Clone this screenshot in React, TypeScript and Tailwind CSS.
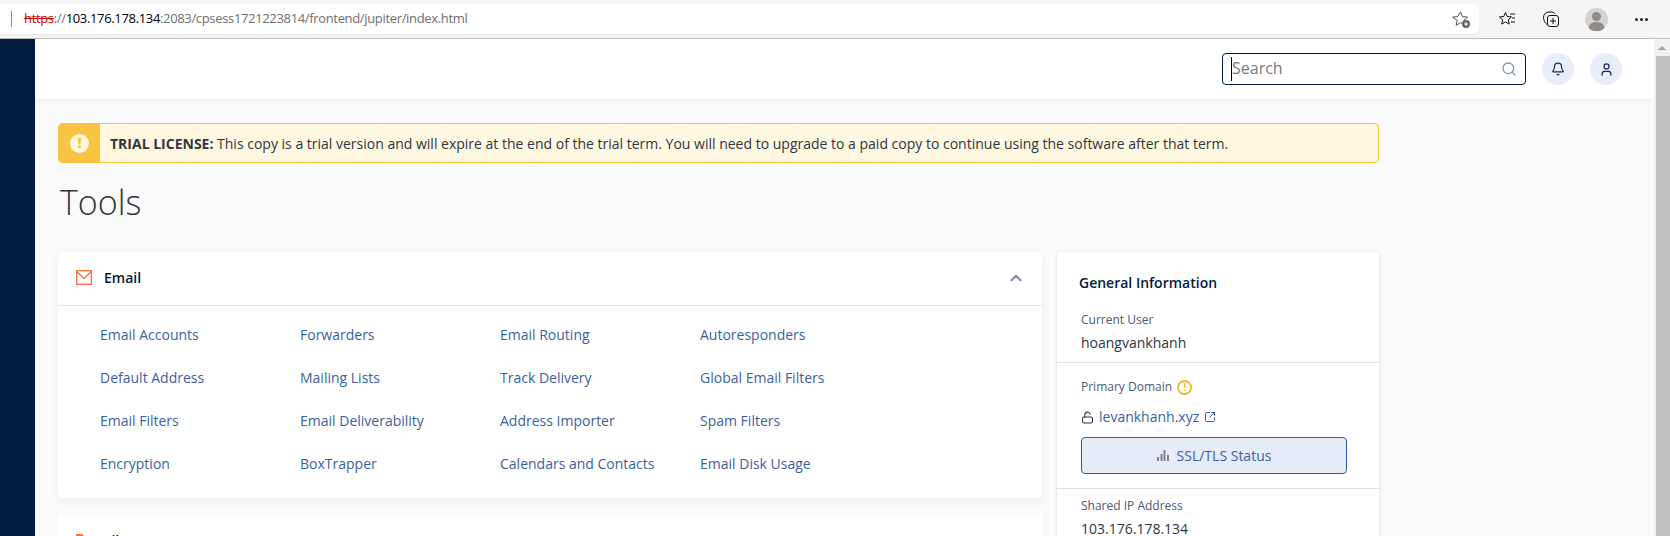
import { Bell, ChevronUp, LockOpen, Search, SquareArrowOutUpRight, User } from "lucide-react";

const font = { fontFamily: '"Open Sans", sans-serif' };

const emailLinks = [
  ["Email Accounts", "Forwarders", "Email Routing", "Autoresponders"],
  ["Default Address", "Mailing Lists", "Track Delivery", "Global Email Filters"],
  ["Email Filters", "Email Deliverability", "Address Importer", "Spam Filters"],
  ["Encryption", "BoxTrapper", "Calendars and Contacts", "Email Disk Usage"],
];

function BrowserBar() {
  return (
    <div className="flex h-[39px] shrink-0 items-start border-b border-[#bdbdbd] bg-[#f5f5f5]">
      <div className="mt-1 flex h-[30px] w-[1479px] items-center justify-between rounded-r-md bg-white pl-[11px] pr-2 shadow-[0_1px_1px_rgba(0,0,0,0.06)]">
        <div className="flex items-center">
          <span className="mr-3 h-4 w-px bg-[#8a8a8a]" />
          <span className="text-[13px] tracking-[-0.34px] text-[#6f6f6f]">
            <span className="text-[#d00000] line-through">https</span>://
            <span className="text-black">103.176.178.134</span>:2083/cpsess1721223814/frontend/jupiter/index.html
          </span>
        </div>
        <svg width="19" height="19" viewBox="0 0 19 19" fill="none">
          <path d="M8.500 2l2 4.600 5 .5-3.700 3.300 1 4.800-4.300-2.500-4.300 2.500 1-4.800L.6 7.100l5-.5z" stroke="#555" strokeWidth="1" fill="#fff" />
          <circle cx="14" cy="14" r="4" fill="#666" />
          <path d="M12 14h4M14 12v4" stroke="#fff" strokeWidth="1" />
        </svg>
      </div>
      <div className="flex h-[38px] flex-1 items-center">
        <svg className="ml-[19px]" width="19" height="19" viewBox="0 0 19 19" fill="none" stroke="#111" strokeWidth="1">
          <path d="M7.500 2.500l1.700 4 4.300.4-3.200 2.900.9 4.300-3.700-2.200-3.800 2.200 1-4.300L1.500 6.900l4.300-.4z" />
          <path d="M12 4h5M14 8h3M13 12h4" />
        </svg>
        <svg className="ml-[25px]" width="19" height="19" viewBox="0 0 19 19" fill="none" stroke="#111" strokeWidth="1">
          <path d="M5 14.500C3 13 1.500 10 1.500 7.500 1.500 4 4 2 7 2h3c1.500 0 2.500 1 3 2" />
          <rect x="5.500" y="5.500" width="11" height="11" rx="2.500" />
          <path d="M11 8v6M8 11h6" />
        </svg>
        <svg className="ml-[24px]" width="23" height="23" viewBox="0 0 23 23">
          <circle cx="11.500" cy="11.500" r="11.500" fill="#d5d3d0" />
          <circle cx="11.500" cy="8.500" r="4.500" fill="#8f8b87" />
          <path d="M3.500 20c1-4.500 4-6 8-6s7 1.500 8 6a11.500 11.500 0 0 1-16 0z" fill="#8f8b87" />
        </svg>
        <span className="ml-[27px] flex gap-[2px]">
          <span className="h-[3px] w-[3px] rounded-full bg-[#222]" />
          <span className="h-[3px] w-[3px] rounded-full bg-[#222]" />
          <span className="h-[3px] w-[3px] rounded-full bg-[#222]" />
        </span>
      </div>
    </div>
  );
}

function TopBar() {
  return (
    <div className="flex h-[60px] shrink-0 items-center justify-end bg-white pr-[32px] shadow-[0_2px_6px_rgba(0,0,0,0.05)]">
      <div className="flex h-8 w-[304px] items-center justify-between rounded border border-[#001b44] pl-[8px] pr-2">
        <span className="-mt-[2px] flex items-center text-base text-[#7a7a7a]">
          <span className="mt-[2px] h-[24px] w-px bg-black" />
          Search
        </span>
        <Search size={16} strokeWidth={2} className="text-[#8294bf]" />
      </div>
      <div className="ml-4 flex h-8 w-8 items-center justify-center rounded-full bg-[#e9ecf9]">
        <Bell size={14} className="text-[#1d2b55]" />
      </div>
      <div className="ml-4 flex h-8 w-8 items-center justify-center rounded-full bg-[#e9ecf9]">
        <User size={15} className="text-[#1d2b55]" />
      </div>
    </div>
  );
}

function Banner() {
  return (
    <div className="flex h-[40px] w-[1321px] overflow-hidden rounded-sm border border-[#f8c441] bg-[#fff8e1]">
      <div className="flex w-[41px] shrink-0 items-center justify-center bg-[#f8c441]">
        <span className="flex h-[19px] w-[19px] items-center justify-center rounded-full bg-[#fff6dc] text-[14px] font-extrabold leading-none text-[#f8c441]">!</span>
      </div>
      <p className="ml-[10px] self-center text-[14px] text-[#2f3541]">
        <b className="font-bold">TRIAL LICENSE:</b> This copy is a trial version and will expire at the end of the trial term. You will need to upgrade to a paid copy to continue using the software after that term.
      </p>
    </div>
  );
}

function EmailCard() {
  return (
    <div className="rounded bg-white shadow-[0_4px_12px_rgba(0,0,0,0.05)]">
      <div className="flex h-[54px] items-center justify-between border-b border-[#e3e8f2] pb-[2px] pl-[18px] pr-[17px]">
        <div className="flex items-center">
          <svg width="16" height="15" viewBox="0 0 16 15" fill="none" stroke="#ff6c3c" strokeWidth="1.300">
            <rect x="0.700" y="0.700" width="14.600" height="13.600" />
            <path d="M1 1.500l7 7 7-7" />
          </svg>
          <span className="ml-3 text-[14px] font-semibold text-[#001b44]">Email</span>
        </div>
        <ChevronUp size={18} strokeWidth={2.5} className="text-[#7b8aa8]" />
      </div>
      <div className="px-[42px] pb-[13px] pt-[7px]">
        {emailLinks.map((row) => (
          <div key={row[0]} className="grid h-[43px] grid-cols-[200px_200px_200px_200px] items-center">
            {row.map((name) => (
              <span key={name} className="text-[14px] text-[#3b5fa5]">{name}</span>
            ))}
          </div>
        ))}
      </div>
    </div>
  );
}

function FilesCard() {
  return (
    <div className="mt-[15px] h-[54px] rounded bg-white">
      <div className="flex h-[54px] items-center pl-[18px]">
        <svg width="16" height="14" viewBox="0 0 16 14" fill="#ff6c3c">
          <path d="M0 1h6l2 2h8v10H0z" />
        </svg>
        <span className="ml-3 text-[14px] font-semibold text-[#001b44]">Files</span>
      </div>
    </div>
  );
}

function GeneralInfo() {
  return (
    <div className="w-[322px] rounded bg-white shadow-[0_1px_4px_rgba(0,0,0,0.12)]">
      <h2 className="px-[22px] pb-[18px] pt-[20px] text-[14px] font-semibold text-[#001b44]">General Information</h2>
      <div className="border-b border-[#dfe1e6] px-[24px] pb-[9px]">
        <div className="text-[12px] text-[#505873]">Current User</div>
        <div className="mt-[3px] text-[14px] text-[#2f3541]">hoangvankhanh</div>
      </div>
      <div className="border-b border-[#dfe1e6] px-[24px] pb-[14px] pt-[15px]">
        <div className="flex items-center text-[12px] text-[#505873]">
          Primary Domain
          <span className="ml-[5px] flex h-[15px] w-[15px] items-center justify-center rounded-full border-2 border-[#f2b92c] text-[10px] font-bold leading-none text-[#f2b92c]">!</span>
        </div>
        <div className="mt-[10px] flex items-center">
          <LockOpen size={13} className="mt-[2px] text-[#2f3541]" />
          <span className="ml-[5px] text-[14px] text-[#3b5fa5]">levankhanh.xyz</span>
          <SquareArrowOutUpRight size={12} className="ml-[5px] text-[#3b5fa5]" />
        </div>
        <div className="mt-[10px] flex h-[37px] w-[266px] items-center justify-center rounded border border-[#2f5aa8] bg-[#e6ebf9] text-[14px] text-[#3b5fa5]">
          <svg width="12" height="11" viewBox="0 0 12 11" fill="#8b7f8f" className="mr-[8px]">
            <path d="M0 7h2v4H0zM3.500 4h2v7h-2zM6.500 0h2v11h-2zM10 5h2v6h-2z" />
          </svg>
          SSL/TLS Status
        </div>
      </div>
      <div className="px-[24px] pt-[8px]">
        <div className="text-[12px] text-[#505873]">Shared IP Address</div>
        <div className="mt-[3px] text-[14px] text-[#2f3541]">103.176.178.134</div>
      </div>
    </div>
  );
}

function Scrollbar() {
  return (
    <div className="flex w-[16px] shrink-0 flex-col items-center bg-[#f1f1f1]">
      <div className="mt-[7px] h-0 w-0 border-x-[4px] border-b-[4px] border-x-transparent border-b-[#a3a3a3]" />
      <div className="mt-[6px] h-full w-[14px] self-end bg-[#bfbfbf]" />
    </div>
  );
}

export default function App() {
  return (
    <div className="flex h-[536px] w-[1670px] flex-col overflow-hidden bg-[#fafafa]" style={font}>
      <BrowserBar />
      <div className="flex min-h-0 flex-1">
        <div className="w-[35px] shrink-0 bg-[#021a40]" />
        <div className="min-w-0 flex-1">
          <TopBar />
          <div className="pl-[23px] pt-[24px]">
            <Banner />
            <h1 className="ml-[2px] mt-[14px] text-[34px] font-light leading-[50px] text-[#2f3541]">Tools</h1>
            <div className="mt-[25px] flex w-[1321px] items-start gap-[15px]">
              <div className="min-w-0 flex-1">
                <EmailCard />
                <FilesCard />
              </div>
              <GeneralInfo />
            </div>
          </div>
        </div>
        <Scrollbar />
      </div>
    </div>
  );
}
